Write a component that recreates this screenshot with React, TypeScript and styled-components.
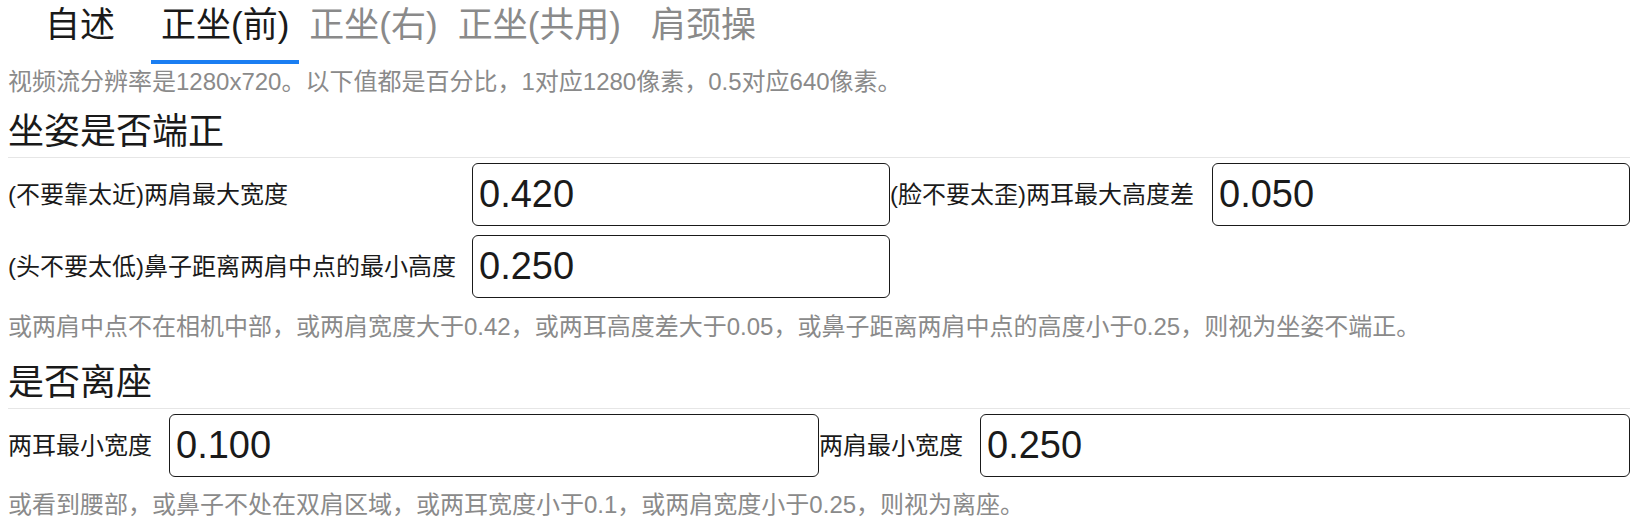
import React from "react";
import styled, { createGlobalStyle } from "styled-components";

const GlobalStyle = createGlobalStyle`
  html, body {
    margin: 0;
    padding: 0;
    background: #ffffff;
  }
  body {
    font-family: "Liberation Sans", "Noto Sans CJK SC", sans-serif;
    color: #1a1a1a;
  }
`;

const Page = styled.div`
  width: 1622px;
  padding-left: 8px;
`;

const TabBar = styled.nav`
  display: flex;
  height: 64px;
`;

const Tab = styled.div<{ $active?: boolean; $dark?: boolean; $before?: number; $after?: number }>`
  box-sizing: border-box;
  height: 64px;
  padding: 0 10px;
  font-size: 35px;
  line-height: 49px;
  white-space: nowrap;
  cursor: pointer;
  color: ${(p) => (p.$active || p.$dark ? "#1a1a1a" : "#8a8a8a")};
  border-bottom: 4px solid ${(p) => (p.$active ? "#1a7ef2" : "transparent")};
  margin-left: ${(p) => p.$before ?? 0}px;
  margin-right: ${(p) => p.$after ?? 0}px;
`;

const Note = styled.p<{ $top?: number }>`
  margin: ${(p) => p.$top ?? 14}px 0 0 0;
  font-size: 24px;
  line-height: 28px;
  color: #8a8a8a;
  white-space: nowrap;
`;

const Heading = styled.h2<{ $top: number }>`
  margin: ${(p) => p.$top}px 0 0 0;
  padding-bottom: 3px;
  font-size: 36px;
  line-height: 44px;
  font-weight: 400;
  color: #1a1a1a;
  border-bottom: 1px solid #e6e6e6;
`;

const FieldGrid = styled.div<{ $cols: string }>`
  display: grid;
  grid-template-columns: ${(p) => p.$cols};
  grid-auto-rows: 63px;
  row-gap: 9px;
  align-items: center;
  margin-top: 5px;
`;

const Label = styled.label`
  font-size: 24px;
  line-height: 28px;
  color: #1a1a1a;
  white-space: nowrap;
`;

const NumberInput = styled.input`
  box-sizing: border-box;
  width: 100%;
  height: 63px;
  margin: 0;
  padding: 0 0 0 6px;
  font-family: "Liberation Sans", Arial, sans-serif;
  font-size: 38px;
  color: #1a1a1a;
  background: #ffffff;
  border: 1px solid #1a1a1a;
  border-radius: 6px;
  outline: none;
`;

type TabDef = { name: string; before?: number; after?: number };

const tabs: TabDef[] = [
  { name: "自述", before: 27, after: 26 },
  { name: "正坐(前)" },
  { name: "正坐(右)" },
  { name: "正坐(共用)" },
  { name: "肩颈操", before: 10 },
];

type Field = { label: string; value: string };

const posture: Field[] = [
  { label: "(不要靠太近)两肩最大宽度", value: "0.420" },
  { label: "(脸不要太歪)两耳最大高度差", value: "0.050" },
  { label: "(头不要太低)鼻子距离两肩中点的最小高度", value: "0.250" },
];

const leave: Field[] = [
  { label: "两耳最小宽度", value: "0.100" },
  { label: "两肩最小宽度", value: "0.250" },
];

function Fields({ items, cols }: { items: Field[]; cols: string }) {
  return (
    <FieldGrid $cols={cols}>
      {items.map((f) => (
        <React.Fragment key={f.label}>
          <Label>{f.label}</Label>
          <NumberInput defaultValue={f.value} />
        </React.Fragment>
      ))}
    </FieldGrid>
  );
}

export default function App() {
  return (
    <>
      <GlobalStyle />
      <Page>
        <TabBar>
          {tabs.map((t, i) => (
            <Tab key={t.name} $before={t.before} $after={t.after} $dark={i === 0} $active={i === 1}>
              {t.name}
            </Tab>
          ))}
        </TabBar>
        <Note $top={4}>视频流分辨率是1280x720。以下值都是百分比，1对应1280像素，0.5对应640像素。</Note>

        <Heading $top={14}>坐姿是否端正</Heading>
        <Fields items={posture} cols="464px 418px 322px 418px" />
        <Note $top={15}>
          或两肩中点不在相机中部，或两肩宽度大于0.42，或两耳高度差大于0.05，或鼻子距离两肩中点的高度小于0.25，则视为坐姿不端正。
        </Note>

        <Heading $top={20}>是否离座</Heading>
        <Fields items={leave} cols="161px 650px 161px 650px" />
        <Note $top={14}>或看到腰部，或鼻子不处在双肩区域，或两耳宽度小于0.1，或两肩宽度小于0.25，则视为离座。</Note>
      </Page>
    </>
  );
}
